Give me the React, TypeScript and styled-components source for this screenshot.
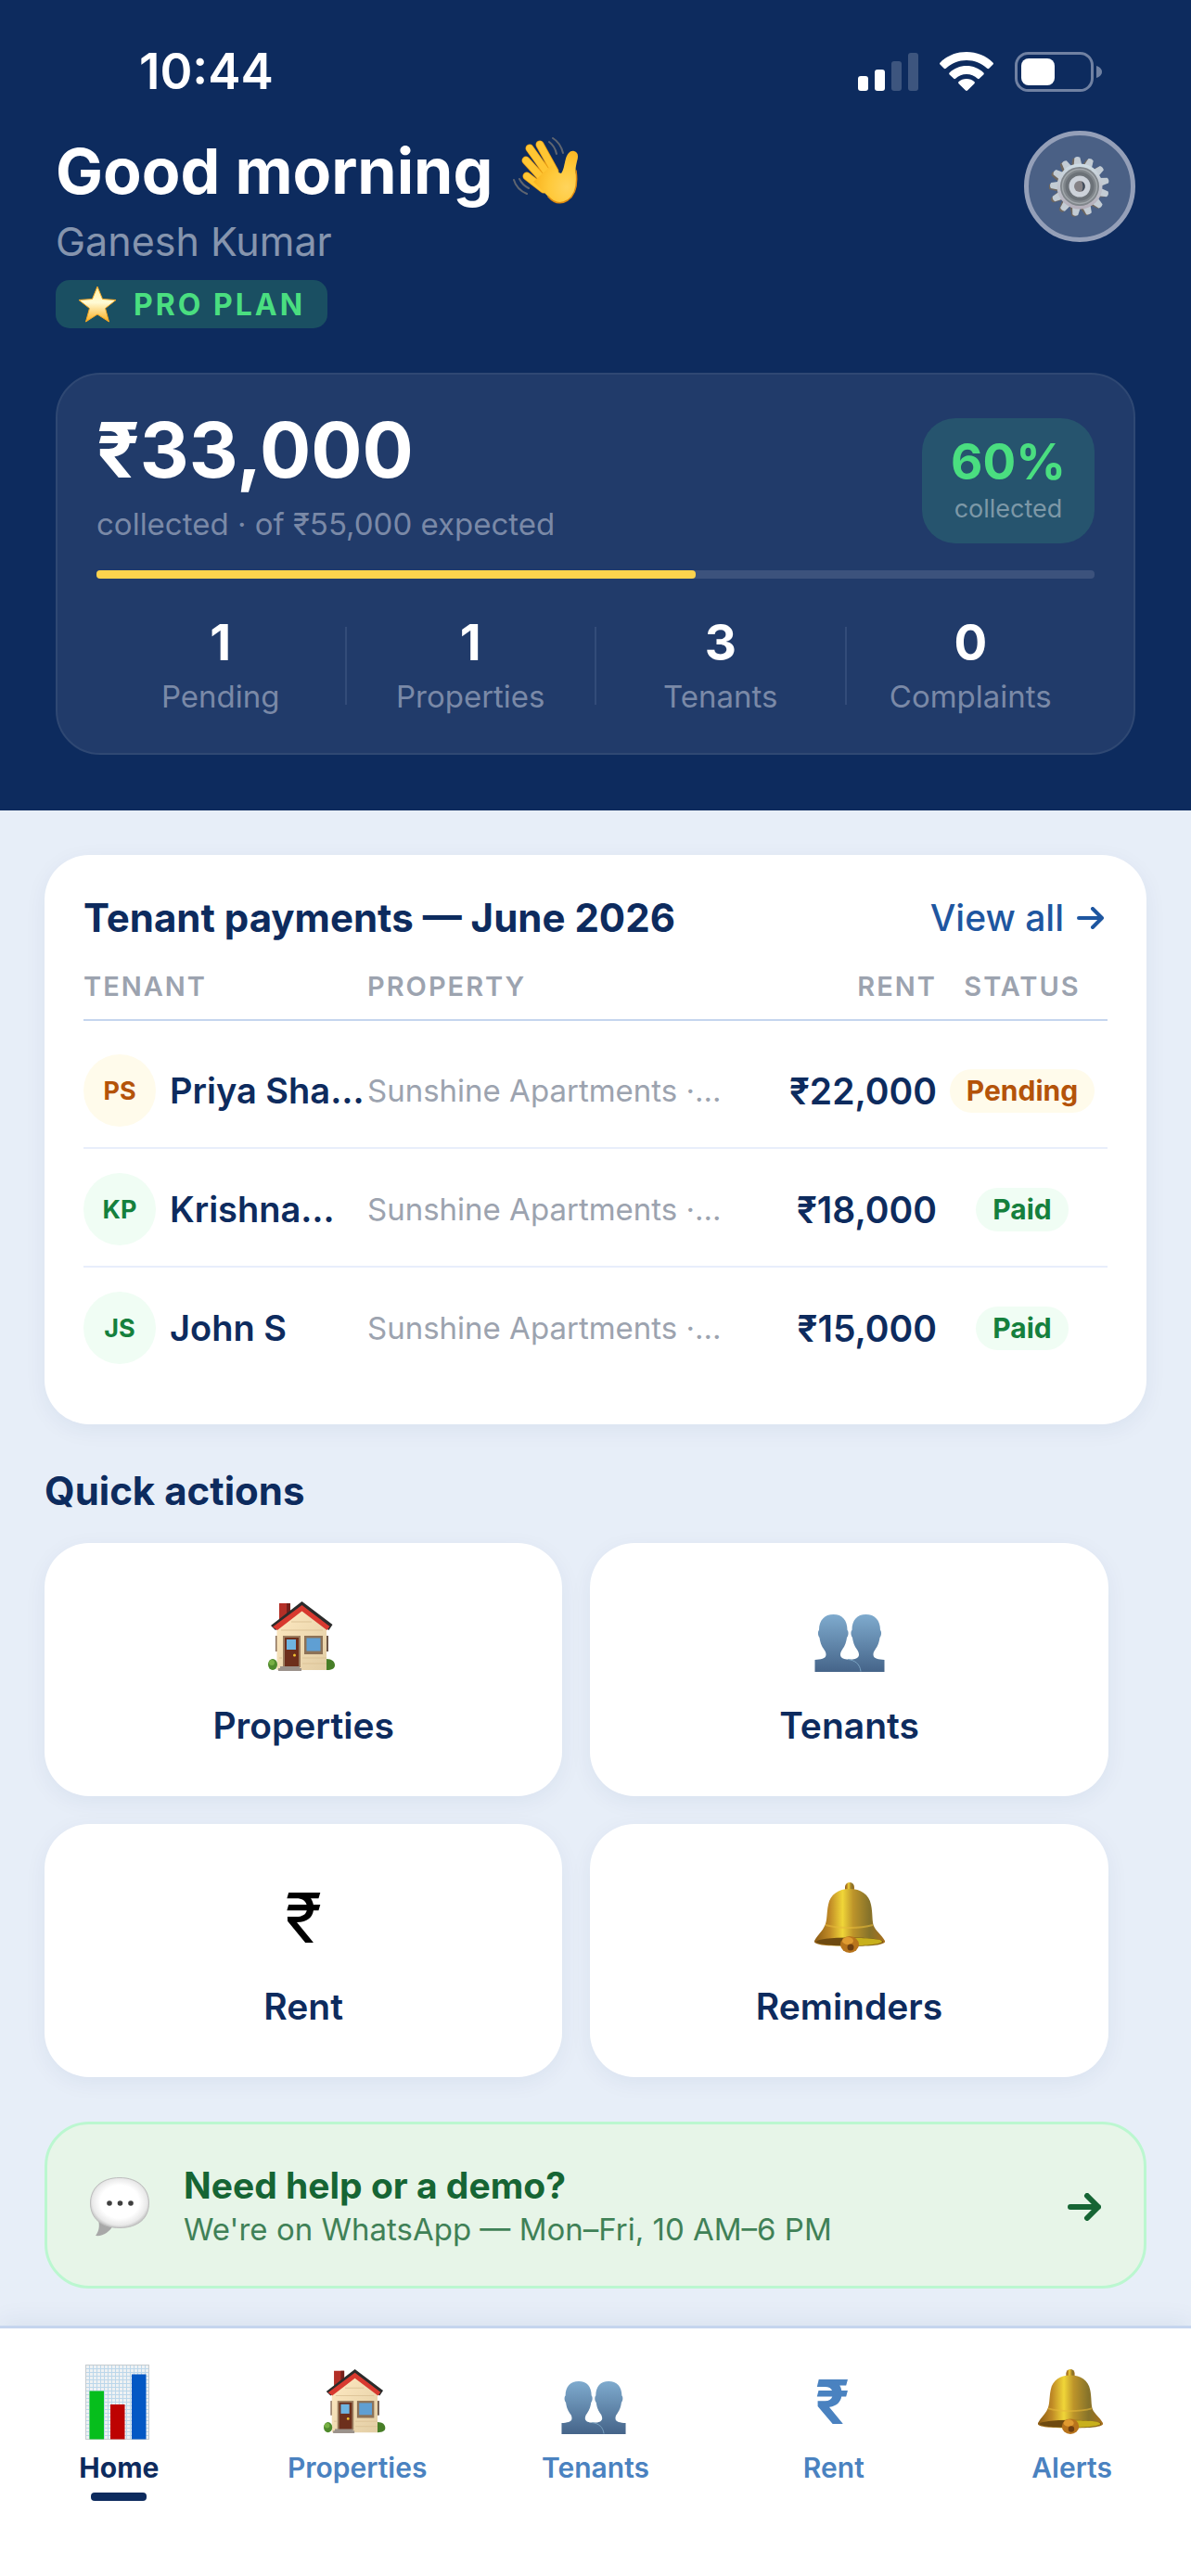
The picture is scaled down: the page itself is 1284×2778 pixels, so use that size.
import React from 'react';
import styled, { createGlobalStyle, css } from 'styled-components';

const COLORS = {
    navy: '#0d2b5e',
    blue: '#1e56a0',
    softBlue: '#4a82c0',
    page: '#e7eef8',
    grey: '#9ca3af',
    line: '#c5d5ee',
    rowLine: '#e8eefb',
    green: '#15803d',
    mint: '#4ade80',
    amber: '#b45309',
};

const GlobalStyle = createGlobalStyle`
    *, *::before, *::after { box-sizing: border-box; }

    body {
        margin: 0;
        background: ${COLORS.page};
        font-family: Inter, 'Liberation Sans', sans-serif;
        color: ${COLORS.navy};
    }

    h1, h2, p { margin: 0; }

    a { color: inherit; text-decoration: none; }

    button { font: inherit; color: inherit; cursor: pointer; }

    svg { display: block; flex: none; }
`;

const Page = styled.div`
    min-height: 100vh;
    display: flex;
    flex-direction: column;
`;

/* ---------- header ---------- */

const Header = styled.header`
    background: ${COLORS.navy};
    color: #fff;
    padding: 45px 60px 60px;
`;

const StatusBar = styled.div`
    display: flex;
    align-items: center;
    justify-content: space-between;
    padding: 0 36px 0 90px;
    margin-bottom: 32px;
`;

const Clock = styled.span`
    font-size: 53px;
    line-height: 64px;
    font-weight: 600;
`;

const StatusIcons = styled.div`
    display: flex;
    align-items: center;
    gap: 23px;
`;

const Greeting = styled.div`
    display: flex;
    align-items: flex-start;
    justify-content: space-between;
    margin-bottom: 48px;
`;

const Title = styled.h1`
    display: flex;
    align-items: center;
    gap: 22px;
    font-size: 68px;
    line-height: 86px;
    font-weight: 700;
    white-space: nowrap;
`;

const UserName = styled.p`
    font-size: 43px;
    line-height: 54px;
    margin: 6px 0 15px;
    color: rgba(255, 255, 255, 0.5);
`;

const Plan = styled.span`
    display: inline-flex;
    align-items: center;
    gap: 18px;
    height: 52px;
    padding: 0 24px;
    border-radius: 15px;
    background: #1a4f62;
    color: ${COLORS.mint};
    font-size: 32px;
    font-weight: 700;
    letter-spacing: 3px;
    vertical-align: top;
`;

const SettingsButton = styled.button`
    display: flex;
    align-items: center;
    justify-content: center;
    width: 120px;
    height: 120px;
    padding: 0;
    border: 5px solid #949fb8;
    border-radius: 50%;
    background: #4a6085;
`;

const Summary = styled.section`
    padding: 38px 42px 40px;
    border: 2px solid #2f4873;
    border-radius: 48px;
    background: #213b6a;
`;

const SummaryTop = styled.div`
    display: flex;
    align-items: flex-end;
    justify-content: space-between;
`;

const Amount = styled.p`
    font-size: 82px;
    line-height: 88px;
    font-weight: 700;
`;

const Muted = styled.p`
    font-size: 33px;
    line-height: 42px;
    color: #7a89a7;
`;

const AmountNote = styled(Muted)`
    margin-top: 14px;
`;

const Badge = styled.div`
    width: 186px;
    padding: 16px 0 17px;
    border-radius: 36px;
    background: #26546e;
    text-align: center;
`;

const BadgeValue = styled.p`
    font-size: 53px;
    line-height: 62px;
    font-weight: 700;
    color: ${COLORS.mint};
`;

const BadgeLabel = styled.p`
    font-size: 27px;
    line-height: 40px;
    color: #7d98a7;
`;

const Track = styled.div`
    height: 9px;
    margin: 29px 0 39px;
    border-radius: 4px;
    background: #3c527c;
`;

const Fill = styled.div`
    height: 100%;
    border-radius: 4px;
    background: #fcd34d;
`;

const Stats = styled.div`
    display: flex;
    align-items: center;
`;

const Stat = styled.div`
    flex: 1;
    text-align: center;
`;

const StatValue = styled.p`
    font-size: 53px;
    line-height: 60px;
    font-weight: 700;
    margin-bottom: 7px;
`;

const StatDivider = styled.span`
    width: 2px;
    height: 84px;
    background: #334c79;
`;

/* ---------- content ---------- */

const Main = styled.main`
    flex: 1;
    padding: 48px 48px 38px;
`;

const cardShadow = css`
    box-shadow: 0 6px 24px rgba(13, 43, 94, 0.06);
`;

const PaymentsCard = styled.section`
    padding: 42px 42px 41px;
    border-radius: 48px;
    background: #fff;
    ${cardShadow}
`;

const CardHead = styled.div`
    display: flex;
    align-items: center;
    justify-content: space-between;
    margin-bottom: 30px;
`;

const Heading = styled.h2`
    font-size: 42px;
    line-height: 52px;
    font-weight: 700;
    white-space: nowrap;
`;

const ViewAll = styled.a`
    display: flex;
    align-items: center;
    gap: 14px;
    padding-right: 4px;
    font-size: 39px;
    line-height: 52px;
    font-weight: 500;
    color: ${COLORS.blue};
`;

const Table = styled.table`
    width: 100%;
    table-layout: fixed;
    border-collapse: separate;
    border-spacing: 0;
    white-space: nowrap;

    tbody::before {
        content: '';
        display: block;
        height: 10px;
    }

    tbody tr:last-child td {
        border-bottom-color: transparent;
    }
`;

type Align = 'left' | 'right' | 'center';

const Th = styled.th<{ $width: string; $align: Align }>`
    width: ${({ $width }) => $width};
    padding: 0 0 17px;
    border-bottom: 2px solid ${COLORS.line};
    font-size: 29px;
    line-height: 36px;
    font-weight: 600;
    letter-spacing: 2px;
    text-align: ${({ $align }) => $align};
    color: ${COLORS.grey};
`;

const Td = styled.td<{ $align?: Align }>`
    height: 128px;
    padding: 4px 0 0;
    border-bottom: 2px solid ${COLORS.rowLine};
    text-align: ${({ $align }) => $align || 'left'};
`;

const Tenant = styled.div`
    display: flex;
    align-items: center;
    gap: 15px;
    font-size: 38px;
    font-weight: 600;
`;

const statusColors = css<{ $paid: boolean }>`
    background: ${({ $paid }) => ($paid ? '#f0fdf4' : '#fffbeb')};
    color: ${({ $paid }) => ($paid ? COLORS.green : COLORS.amber)};
`;

const Avatar = styled.span<{ $paid: boolean }>`
    display: flex;
    align-items: center;
    justify-content: center;
    flex: none;
    width: 78px;
    height: 78px;
    border-radius: 50%;
    font-size: 27px;
    font-weight: 700;
    ${statusColors}
`;

const PropertyName = styled.span`
    font-size: 33px;
    color: ${COLORS.grey};
`;

const Rent = styled.span`
    font-size: 39px;
    font-weight: 600;
`;

const StatusPill = styled.span<{ $paid: boolean }>`
    display: inline-block;
    padding: 0 18px;
    border-radius: 24px;
    font-size: 30px;
    line-height: 47px;
    font-weight: 700;
    vertical-align: middle;
    ${statusColors}
`;

const QuickHeading = styled(Heading)`
    margin: 46px 0 30px;
`;

const Tiles = styled.div`
    display: flex;
    flex-wrap: wrap;
    gap: 30px;
`;

const Tile = styled.button`
    flex: 0 0 47%;
    display: flex;
    flex-direction: column;
    align-items: center;
    gap: 34px;
    padding: 63px 0 52px;
    border: 0;
    border-radius: 48px;
    background: #fff;
    font-size: 39px;
    line-height: 48px;
    font-weight: 600;
    ${cardShadow}
`;

const TileRupee = styled.span`
    font-size: 74px;
    line-height: 76px;
    font-weight: 400;
    color: #000;
`;

const HelpLink = styled.a`
    display: flex;
    align-items: center;
    margin-top: 48px;
    padding: 42px 46px 38px;
    border: 3px solid #bbf7d0;
    border-radius: 48px;
    background: #e7f5e8;
    color: #166534;
`;

const HelpText = styled.div`
    flex: 1;
    margin-left: 37px;
`;

const HelpTitle = styled.p`
    font-size: 39px;
    line-height: 48px;
    font-weight: 700;
`;

const HelpNote = styled.p`
    font-size: 33px;
    line-height: 46px;
    opacity: 0.8;
`;

/* ---------- bottom navigation ---------- */

const TabBar = styled.nav`
    display: flex;
    padding: 38px 0 81px;
    border-top: 3px solid ${COLORS.line};
    background: #fff;
    box-shadow: 0 -6px 24px rgba(13, 43, 94, 0.06);
`;

const Tab = styled.a<{ $active?: boolean }>`
    flex: 1;
    display: flex;
    flex-direction: column;
    align-items: center;
    font-size: 30px;
    line-height: 36px;
    font-weight: ${({ $active }) => ($active ? 700 : 600)};
    color: ${({ $active }) => ($active ? COLORS.navy : COLORS.softBlue)};

    &::after {
        content: '';
        width: 60px;
        height: 9px;
        margin-top: 9px;
        border-radius: 4px;
        background: ${({ $active }) => ($active ? COLORS.navy : 'transparent')};
    }
`;

const TabIcon = styled.span`
    display: flex;
    align-items: center;
    justify-content: center;
    height: 82px;
    margin-bottom: 12px;
    padding-right: 3px;
`;

const TabRupee = styled.span`
    font-size: 66px;
    font-weight: 700;
`;

/* ---------- icons ---------- */

const Gradients = styled.svg`
    position: absolute;
    width: 0;
    height: 0;
`;

function IconDefs() {
    return (
        <Gradients aria-hidden="true">
            <defs>
                <linearGradient id="people" x1="0" y1="0" x2="0" y2="1">
                    <stop offset="0" stopColor="#7fabce" />
                    <stop offset="1" stopColor="#456489" />
                </linearGradient>
                <linearGradient id="brass" x1="0" y1="0" x2="1" y2="0">
                    <stop offset="0" stopColor="#8a5a14" />
                    <stop offset="0.22" stopColor="#c08a26" />
                    <stop offset="0.4" stopColor="#f0d638" />
                    <stop offset="0.55" stopColor="#bd942a" />
                    <stop offset="0.78" stopColor="#85722a" />
                    <stop offset="1" stopColor="#a9701d" />
                </linearGradient>
                <linearGradient id="wall" x1="0" y1="0" x2="1" y2="1">
                    <stop offset="0" stopColor="#ffeac2" />
                    <stop offset="1" stopColor="#e2cda4" />
                </linearGradient>
                <radialGradient id="skin" cx="0.75" cy="0.7" r="0.8">
                    <stop offset="0" stopColor="#ffd45c" />
                    <stop offset="0.5" stopColor="#ffc93a" />
                    <stop offset="1" stopColor="#f9b21c" />
                </radialGradient>
                <linearGradient id="star" x1="0" y1="0" x2="0" y2="1">
                    <stop offset="0" stopColor="#fff0a0" />
                    <stop offset="0.45" stopColor="#fffbd6" />
                    <stop offset="1" stopColor="#fbb021" />
                </linearGradient>
                <radialGradient id="bubble" cx="0.5" cy="0.48" r="0.55">
                    <stop offset="0.6" stopColor="#ffffff" />
                    <stop offset="0.85" stopColor="#e9e9e9" />
                    <stop offset="1" stopColor="#b4b4b4" />
                </radialGradient>
                <linearGradient id="steel" x1="0" y1="0" x2="0" y2="1">
                    <stop offset="0" stopColor="#cfdde4" />
                    <stop offset="1" stopColor="#b3adb8" />
                </linearGradient>
            </defs>
        </Gradients>
    );
}

function SignalIcon() {
    return (
        <svg width="65" height="43" viewBox="0 0 65 43" fill="#fff" aria-hidden="true">
            <rect x="0" y="26" width="11" height="16" rx="3" />
            <rect x="18" y="19" width="11" height="23" rx="3" />
            <rect x="36" y="10" width="11" height="32" rx="3" opacity="0.2" />
            <rect x="54" y="1" width="11" height="41" rx="3" opacity="0.2" />
        </svg>
    );
}

function WifiIcon() {
    return (
        <svg width="58" height="43" viewBox="0 0 58 43" fill="#fff" aria-hidden="true">
            <path d="M29 0C40 0 50 4 57.400 11.400c.8.8.8 1.500.1 2.200l-4.200 4.200c-.7.700-1.400.600-2.100 0C45 12 37.500 9 29 9S13 12 6.800 17.800c-.7.600-1.400.700-2.100 0L.5 13.600c-.7-.7-.7-1.400.1-2.200C8 4 18 0 29 0Z" />
            <path d="M29 15c7 0 13.400 2.700 18.200 7.200.8.8.8 1.500.1 2.200l-4.300 4.200c-.7.700-1.400.700-2.100.1C37.700 25.700 33.500 24 29 24s-8.700 1.700-11.900 4.700c-.7.600-1.400.600-2.100-.1l-4.300-4.200c-.7-.7-.7-1.400.1-2.200C15.600 17.700 22 15 29 15Z" />
            <path d="M29 29c3.300 0 6.200 1.200 8.300 3.100.8.700.8 1.400.1 2.100l-7.100 7.100c-.9.900-1.700.9-2.600 0l-7.100-7.100c-.7-.7-.7-1.400.1-2.100C22.800 30.200 25.700 29 29 29Z" />
        </svg>
    );
}

function BatteryIcon() {
    return (
        <svg width="94" height="43" viewBox="0 0 94 43" fill="none" aria-hidden="true">
            <rect x="1.500" y="1.500" width="82" height="40" rx="13" stroke="#7081a2" strokeWidth="3" />
            <rect x="7" y="7" width="36" height="29" rx="8" fill="#fff" />
            <path d="M88 15c3.500 1 6 3.500 6 6.500S91.500 27 88 28Z" fill="#7081a2" />
        </svg>
    );
}

function WaveIcon() {
    return (
        <svg width="72" height="72" viewBox="0 0 72 72" fill="none" strokeLinecap="round" aria-hidden="true">
            <g stroke="#5f6570" strokeWidth="2">
                <path d="M43 1c5 3 9 8 11 16M39 5c4 3 7 8 8 13M1 46c2 7 7 12 14 15M7 45c2 4 6 8 10 10" />
            </g>
            <g stroke="#e89a12" strokeWidth="9">
                <path d="m29 8 16 29M18 12l20 28M14 25l20 22M15 42l18 14" />
            </g>
            <g stroke="#ffc633" strokeWidth="7.500">
                <path d="m29 8 16 29M18 12l20 28M14 25l20 22M15 42l18 14" />
            </g>
            <path d="M42 30c3 5 6 8 10 9 3-4 3-9 5-16 2-6 5-9 9-8 4 1 5 5 3 11-1 5-2 8-1 14 1 13 0 22-9 28-8 5-15 3-21-4L22 48Z" fill="url(#skin)" />
            <path d="M68 36c2 15 0 26-9 32-8 5-15 3-21-4" stroke="#de8a10" strokeWidth="1.500" />
        </svg>
    );
}

function StarIcon() {
    return (
        <svg width="42" height="40" viewBox="0 0 42 40" aria-hidden="true">
            <path d="m21 1 5.500 13.500L41 15.500 29.500 24.500 33.500 39 21 31 8.500 39l4-14.500L1 15.500l14.500-1Z" fill="url(#star)" stroke="#f5a623" strokeLinejoin="round" />
        </svg>
    );
}

const TEETH = Array.from({ length: 13 }, (_, i) => (i * 360) / 13 - 5);

function GearIcon() {
    return (
        <svg width="66" height="66" viewBox="-33 -33 66 66" aria-hidden="true">
            <g fill="#6f675f">
                {TEETH.map((a) => (
                    <path key={a} d="m-5-22 2-9q3-2 5 0l3 9Z" transform={`translate(-2 1) rotate(${a})`} />
                ))}
            </g>
            <g fill="#c3ccd4">
                {TEETH.map((a) => (
                    <path key={a} d="m-4.500-22 1.500-9q3-2 6 0l1.500 9Z" transform={`rotate(${a})`} />
                ))}
            </g>
            <circle r="24.500" fill="url(#steel)" />
            <circle r="21" fill="#80868b" />
            <circle r="18.500" fill="none" stroke="#a2a8ac" strokeWidth="1.500" />
            <circle r="15.500" fill="#6c7278" />
            <circle r="11.500" fill="#cdd2da" />
            <circle r="6" fill="#868286" />
            <path d="M2-5.500a6 6 0 0 1 0 11q3-5 0-11Z" fill="#3f4a5a" />
        </svg>
    );
}

function HouseIcon({ size = 76 }: { size?: number }) {
    return (
        <svg width={size} height={size} viewBox="0 0 76 76" aria-hidden="true">
            <path d="M12 2h12v14L12 26Z" fill="#b32f27" />
            <path d="M20 2h4v14l-4 4Z" fill="#74201b" />
            <rect x="8" y="37" width="3" height="17" fill="#8a705c" />
            <rect x="62" y="37" width="3" height="17" fill="#6b5648" />
            <path d="M9.500 74V27l27-20L63 27v47Z" fill="url(#wall)" />
            <path d="M14 31h45M12 61h3m22 0h26M37 67h26M25 22h22" stroke="#dcc397" />
            <path d="m36.500 0 33 25-4 6-29-22L8 31l-5-5Z" fill="#2b2b2b" />
            <path d="m36.500 4 30 23-3 4-27-20.500L10 31l-5-3.500Z" fill="#d8392f" />
            <rect x="16" y="37" width="19" height="34" fill="#9b7d5f" />
            <rect x="18" y="39" width="15" height="32" fill="#6d2f1c" />
            <rect x="20" y="41" width="10" height="11" fill="#6fb4e0" />
            <circle cx="28.500" cy="58" r="1.500" fill="#f2c230" />
            <rect x="39" y="37" width="20" height="20" fill="#8d7257" />
            <rect x="41.500" y="39.500" width="15" height="14" fill="#5f9fd3" />
            <path d="M13 70h21v2h2v3H11v-3h2Z" fill="#9b928b" />
            <ellipse cx="5" cy="68" rx="5" ry="6" fill="#4f8a2c" />
            <ellipse cx="4" cy="66" rx="3" ry="3" fill="#77b043" />
            <path d="M63 62c6 0 9 3 9 7 0 3-3 5-9 5Z" fill="#477e27" />
        </svg>
    );
}

function PeopleIcon({ size = 76 }: { size?: number }) {
    const person = 'M20.500 14C30 14 35.500 20 35.500 31c1.500 1 1.500 6-.5 8-1 7-3 10-5 13-1.500 2-2 4-2 5.500 0 3 3 4.500 7 5 9 .500 15 4.500 15 13.500H.5V63c6-.5 12-1 12-5.500 0-2-.5-3.500-2-5.500-2-3-4-6-5-13-2-2-2-7-.5-8C5 20 11 14 20.500 14Z';
    return (
        <svg width={size} height={size} viewBox="0 0 76 76" aria-hidden="true">
            <path d={person} fill="url(#people)" transform="matrix(-1 0 0 1 76 0)" />
            <path d={person} fill="url(#people)" />
            <path d="M36 62.500c8 1 13 5 14 13" fill="none" stroke="#7aa3c2" />
        </svg>
    );
}

function BellIcon({ size = 76 }: { size?: number }) {
    return (
        <svg width={size} height={size} viewBox="0 0 76 76" aria-hidden="true">
            <rect x="33" y="0" width="10" height="12" rx="5" fill="url(#brass)" />
            <path d="M38 7c12 0 21 6 23 17 2 9 1 18 3 23 2 5 8 9 12 16 2 5-17 6-38 6S-2 68 0 63c4-7 9-11 11-16 3-5 2-14 4-23C17 13 26 7 38 7Z" fill="url(#brass)" />
            <path d="M12 46c14 4 37 4 51 0" fill="none" stroke="#e6b93a" strokeWidth="2" opacity="0.6" />
            <ellipse cx="38" cy="64" rx="36" ry="4.500" fill="#6e4a10" />
            <path d="M40 60c19 0 33 1 33 4 0 2-14 4-26 4Z" fill="#c8b01c" />
            <ellipse cx="38" cy="67" rx="10" ry="9" fill="#b8741c" />
            <ellipse cx="36" cy="63" rx="6" ry="4" fill="#e09a30" />
            <circle cx="39" cy="70" r="3.500" fill="#6f3f10" />
        </svg>
    );
}

function ChartIcon() {
    return (
        <svg width="69" height="81" viewBox="0 0 69 81" aria-hidden="true">
            <rect width="69" height="81" fill="#eef1f3" />
            <path d="M4.500 0v81m4-81v81m4-81v81m4-81v81m4-81v81m4-81v81m4-81v81m4-81v81m4-81v81m4-81v81m4-81v81m4-81v81m4-81v81m4-81v81m4-81v81m4-81v81" stroke="#bcd7ea" />
            <path d="M0 4.500h69m-69 4h69m-69 4h69m-69 4h69m-69 4h69m-69 4h69m-69 4h69m-69 4h69m-69 4h69m-69 4h69m-69 4h69m-69 4h69m-69 4h69m-69 4h69m-69 4h69m-69 4h69m-69 4h69m-69 4h69m-69 4h69" stroke="#bcd7ea" />
            <rect x=".5" y=".5" width="68" height="80" fill="none" stroke="#c6ccd0" />
            <rect x="4.500" y="28.500" width="15.500" height="52" fill="#06be1c" />
            <rect x="27" y="43" width="15.500" height="37.500" fill="#bd0202" />
            <rect x="50" y="10.500" width="15.500" height="70" fill="#0458c4" />
        </svg>
    );
}

function BubbleIcon() {
    return (
        <svg width="64" height="64" viewBox="0 0 64 64" aria-hidden="true">
            <path d="M9 46c2 8 0 13-3 17 8 1 15-4 19-11Z" fill="#a8a8a8" />
            <path d="M32 .5C52 .5 63.500 12 63.500 28S52 54.500 32 54.500.5 44 .5 28 12 .5 32 .5Z" fill="url(#bubble)" stroke="#bdbdbd" />
            <g fill="#3f3f3f">
                <circle cx="21" cy="28" r="2.800" />
                <circle cx="32.500" cy="28" r="2.800" />
                <circle cx="44" cy="28" r="2.800" />
            </g>
        </svg>
    );
}

function ArrowIcon({ width, height, weight }: { width: number; height: number; weight: number }) {
    const m = height / 2;
    const p = weight / 2;
    return (
        <svg width={width} height={height} fill="none" stroke="currentColor" strokeWidth={weight} strokeLinecap="round" strokeLinejoin="round" aria-hidden="true">
            <path d={`M${p} ${m}H${width - p}M${width - m} ${p}L${width - p} ${m}L${width - m} ${height - p}`} />
        </svg>
    );
}

/* ---------- data ---------- */

const stats = [
    { label: 'Pending', value: 1 },
    { label: 'Properties', value: 1 },
    { label: 'Tenants', value: 3 },
    { label: 'Complaints', value: 0 },
];

const payments = [
    { initials: 'PS', name: 'Priya Sha…', rent: '₹22,000', paid: false },
    { initials: 'KP', name: 'Krishna…', rent: '₹18,000', paid: true },
    { initials: 'JS', name: 'John S', rent: '₹15,000', paid: true },
];

const collectedPercent = 60;

function App() {
    return (
        <Page>
            <GlobalStyle />
            <IconDefs />
            <Header>
                <StatusBar>
                    <Clock>10:44</Clock>
                    <StatusIcons>
                        <SignalIcon />
                        <WifiIcon />
                        <BatteryIcon />
                    </StatusIcons>
                </StatusBar>
                <Greeting>
                    <div>
                        <Title>Good morning <WaveIcon /></Title>
                        <UserName>Ganesh Kumar</UserName>
                        <Plan><StarIcon />PRO PLAN</Plan>
                    </div>
                    <SettingsButton type="button" aria-label="Settings"><GearIcon /></SettingsButton>
                </Greeting>
                <Summary>
                    <SummaryTop>
                        <div>
                            <Amount>₹33,000</Amount>
                            <AmountNote>collected · of ₹55,000 expected</AmountNote>
                        </div>
                        <Badge>
                            <BadgeValue>{collectedPercent}%</BadgeValue>
                            <BadgeLabel>collected</BadgeLabel>
                        </Badge>
                    </SummaryTop>
                    <Track>
                        <Fill style={{ width: `${collectedPercent}%` }} />
                    </Track>
                    <Stats>
                        {stats.map(({ label, value }, i) => (
                            <React.Fragment key={label}>
                                {i > 0 && <StatDivider />}
                                <Stat>
                                    <StatValue>{value}</StatValue>
                                    <Muted>{label}</Muted>
                                </Stat>
                            </React.Fragment>
                        ))}
                    </Stats>
                </Summary>
            </Header>

            <Main>
                <PaymentsCard>
                    <CardHead>
                        <Heading>Tenant payments — June 2026</Heading>
                        <ViewAll href="#payments">View all <ArrowIcon width={29} height={24} weight={4} /></ViewAll>
                    </CardHead>
                    <Table>
                        <thead>
                            <tr>
                                <Th $width="306px" $align="left">TENANT</Th>
                                <Th $width="auto" $align="left">PROPERTY</Th>
                                <Th $width="220px" $align="right">RENT</Th>
                                <Th $width="184px" $align="center">STATUS</Th>
                            </tr>
                        </thead>
                        <tbody>
                            {payments.map(({ initials, name, rent, paid }) => (
                                <tr key={initials}>
                                    <Td>
                                        <Tenant>
                                            <Avatar $paid={paid}>{initials}</Avatar>
                                            {name}
                                        </Tenant>
                                    </Td>
                                    <Td><PropertyName>Sunshine Apartments ·…</PropertyName></Td>
                                    <Td $align="right"><Rent>{rent}</Rent></Td>
                                    <Td $align="center">
                                        <StatusPill $paid={paid}>{paid ? 'Paid' : 'Pending'}</StatusPill>
                                    </Td>
                                </tr>
                            ))}
                        </tbody>
                    </Table>
                </PaymentsCard>

                <QuickHeading>Quick actions</QuickHeading>
                <Tiles>
                    <Tile type="button"><HouseIcon />Properties</Tile>
                    <Tile type="button"><PeopleIcon />Tenants</Tile>
                    <Tile type="button"><TileRupee>₹</TileRupee>Rent</Tile>
                    <Tile type="button"><BellIcon />Reminders</Tile>
                </Tiles>

                <HelpLink href="#help">
                    <BubbleIcon />
                    <HelpText>
                        <HelpTitle>Need help or a demo?</HelpTitle>
                        <HelpNote>We're on WhatsApp — Mon–Fri, 10 AM–6 PM</HelpNote>
                    </HelpText>
                    <ArrowIcon width={36} height={30} weight={6} />
                </HelpLink>
            </Main>

            <TabBar>
                <Tab href="#home" $active><TabIcon><ChartIcon /></TabIcon>Home</Tab>
                <Tab href="#properties"><TabIcon><HouseIcon size={70} /></TabIcon>Properties</Tab>
                <Tab href="#tenants"><TabIcon><PeopleIcon size={70} /></TabIcon>Tenants</Tab>
                <Tab href="#rent"><TabIcon><TabRupee>₹</TabRupee></TabIcon>Rent</Tab>
                <Tab href="#alerts"><TabIcon><BellIcon size={70} /></TabIcon>Alerts</Tab>
            </TabBar>
        </Page>
    );
}

export default App;
